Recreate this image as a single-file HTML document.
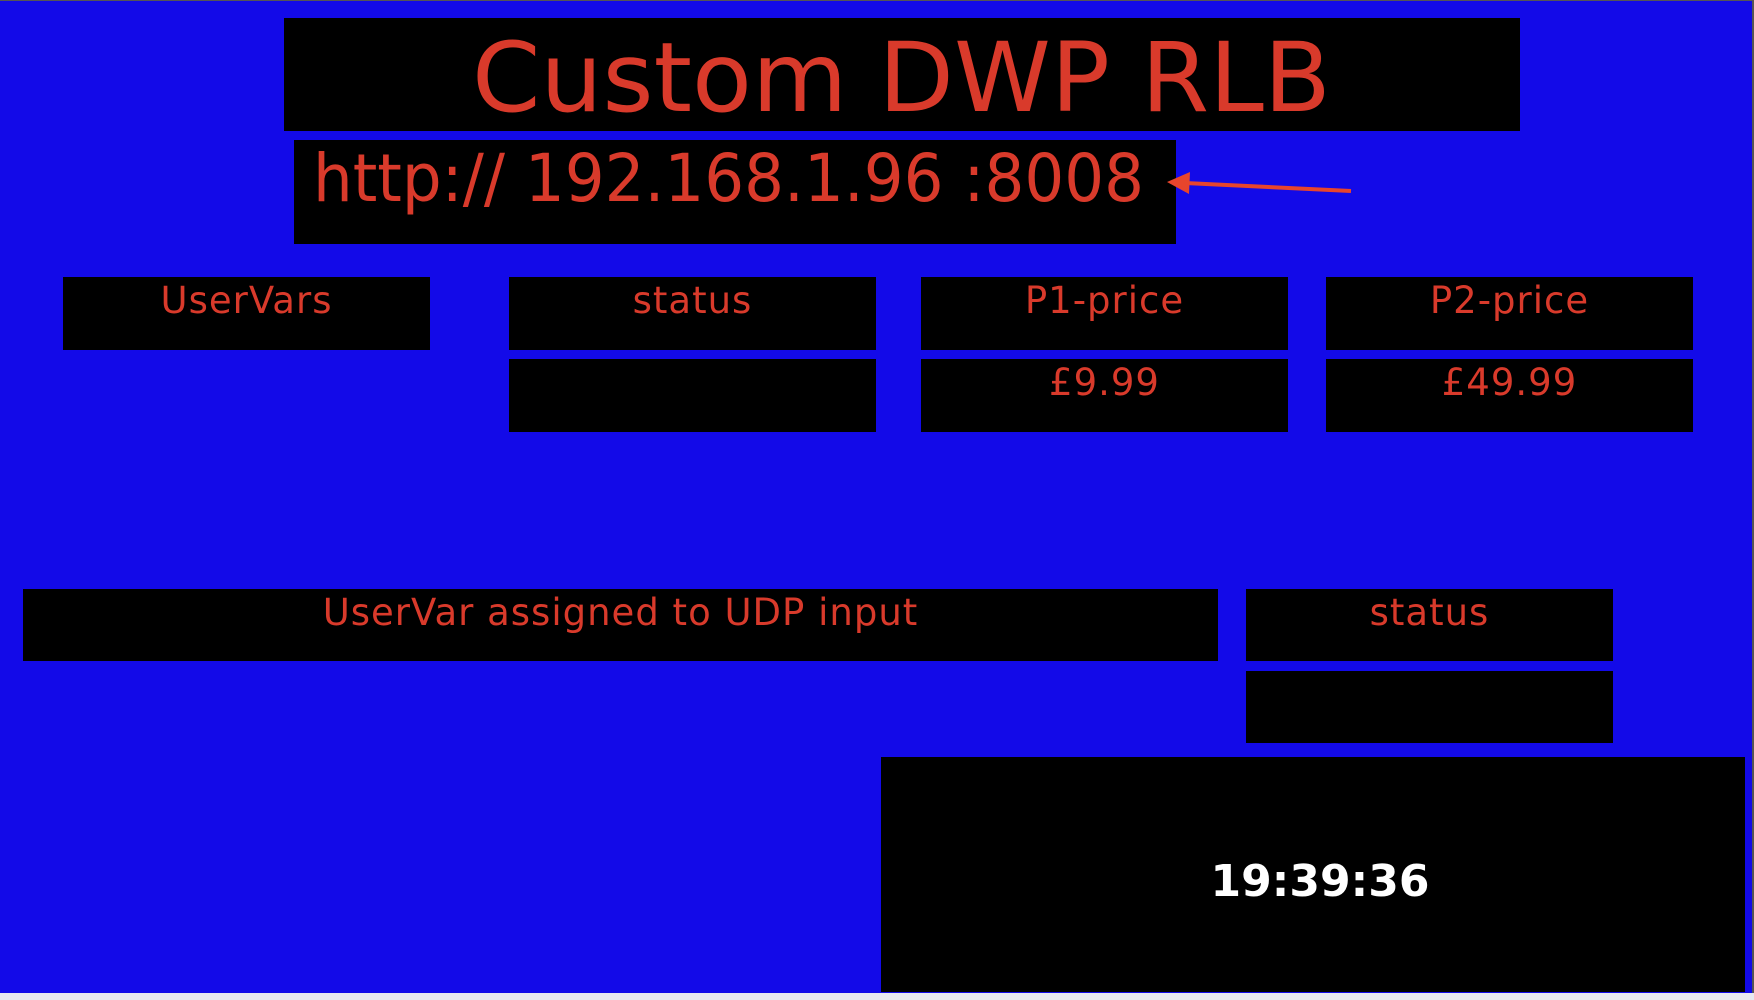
<!DOCTYPE html>
<html><head><meta charset="utf-8"><style>
html,body{margin:0;padding:0;width:1754px;height:1000px;overflow:hidden;background:#555}
#p{position:absolute;left:0;top:1px;width:1752px;height:992px;background:#130ae8}
.b{position:absolute;background:#000;color:#d93a2b;font-family:"DejaVu Sans","Liberation Sans",sans-serif;font-size:37px;letter-spacing:1px;text-align:center;line-height:1;box-sizing:border-box;padding-top:5px}
svg{position:absolute;left:0;top:0}
</style></head><body>
<div style="position:absolute;left:0;top:993px;width:1754px;height:7px;background:#e8e8f0"></div>
<div id="p"></div>
<div class="b" style="left:284px;top:18px;width:1236px;height:113px"></div>
<div class="b" style="left:294px;top:140px;width:882px;height:104px"></div>
<div class="b" style="left:63px;top:277px;width:367px;height:73px">UserVars</div>
<div class="b" style="left:509px;top:277px;width:367px;height:73px">status</div>
<div class="b" style="left:921px;top:277px;width:367px;height:73px">P1-price</div>
<div class="b" style="left:1326px;top:277px;width:367px;height:73px">P2-price</div>
<div class="b" style="left:509px;top:359px;width:367px;height:73px"></div>
<div class="b" style="left:921px;top:359px;width:367px;height:73px">£9.99</div>
<div class="b" style="left:1326px;top:359px;width:367px;height:73px">£49.99</div>
<div class="b" style="left:23px;top:589px;width:1195px;height:72px">UserVar assigned to UDP input</div>
<div class="b" style="left:1246px;top:589px;width:367px;height:72px">status</div>
<div class="b" style="left:1246px;top:671px;width:367px;height:72px"></div>
<div class="b" style="left:881px;top:757px;width:864px;height:235px;padding-top:103px;padding-left:14px;color:#fff;font-weight:bold;font-size:44px;letter-spacing:0">19:39:36</div>
<svg width="1754" height="1000">
<text x="472" y="111" textLength="859" lengthAdjust="spacingAndGlyphs" font-family="DejaVu Sans, sans-serif" font-size="96" fill="#d93a2b">Custom DWP RLB</text>
<text x="313" y="201" textLength="831" lengthAdjust="spacingAndGlyphs" font-family="DejaVu Sans, sans-serif" font-size="66" fill="#d93a2b">http:// 192.168.1.96 :8008</text>
<line x1="1351" y1="191" x2="1185" y2="183" stroke="#e8452c" stroke-width="4"/>
<polygon points="1167,182 1190,172 1189,194" fill="#e8452c"/>
</svg>
</body></html>
